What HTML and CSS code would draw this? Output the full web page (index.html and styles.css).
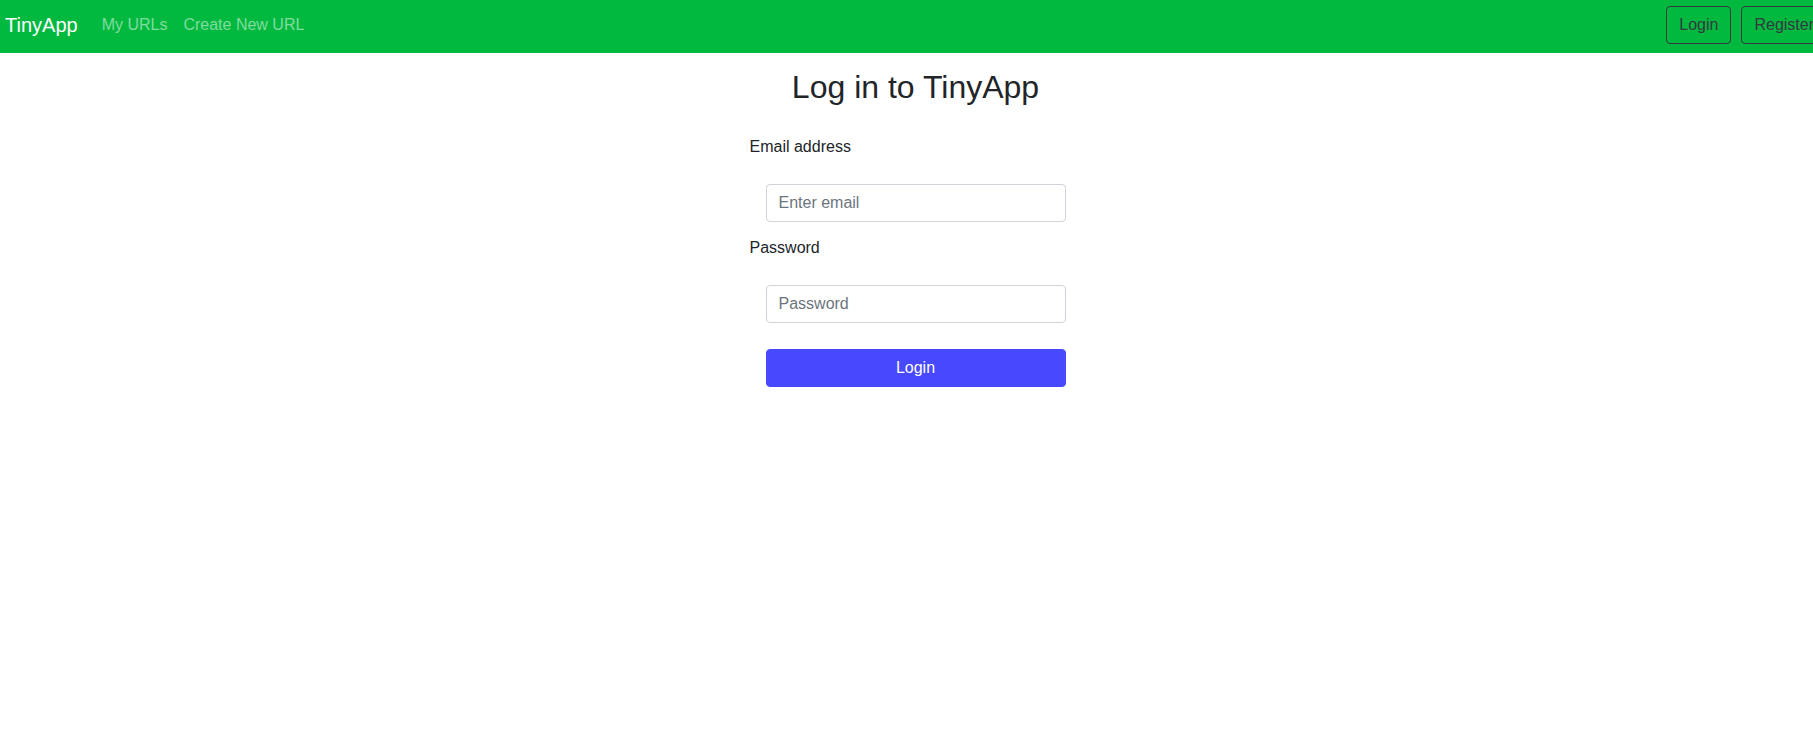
FILE: index.html
```html
<!DOCTYPE html>
<html lang="en">
<head>
<meta charset="utf-8">
<title>TinyApp - Login</title>
<link rel="stylesheet" href="styles.css">
</head>
<body>
<nav class="navbar">
  <div class="nav-left">
    <a class="brand" href="#">TinyApp</a>
    <a class="nav-link" href="#">My URLs</a>
    <a class="nav-link" href="#">Create New URL</a>
  </div>
  <div class="nav-right">
    <a class="btn-outline" href="#">Login</a>
    <a class="btn-outline" href="#">Register</a>
  </div>
</nav>
<main class="main">
  <h1 class="title">Log in to TinyApp</h1>
  <form class="login-form">
    <label class="field-label" for="email">Email address</label>
    <input class="field-input field-input-first" type="email" id="email" placeholder="Enter email">
    <label class="field-label" for="password">Password</label>
    <input class="field-input" type="password" id="password" placeholder="Password">
    <button class="submit-btn" type="submit">Login</button>
  </form>
</main>
</body>
</html>
```

FILE: styles.css
```css
* { box-sizing: border-box; }

html, body {
  margin: 0;
  padding: 0;
  overflow-x: hidden;
}

body {
  font-family: "Liberation Sans", Arial, sans-serif;
  font-size: 16px;
  line-height: 1.5;
  color: #212529;
  background: #fff;
}

.navbar {
  display: flex;
  align-items: center;
  justify-content: space-between;
  height: 53px;
  padding: 6px 0 9px 5px;
  background: #00b93e;
  overflow: hidden;
}

.nav-left {
  display: flex;
  align-items: center;
}

.brand {
  font-size: 20px;
  line-height: 30px;
  color: #fff;
  text-decoration: none;
  margin-right: 16px;
}

.nav-link {
  padding: 0 8px;
  line-height: 24px;
  color: rgba(255, 255, 255, 0.5);
  text-decoration: none;
}

.nav-right {
  display: flex;
  align-items: center;
  gap: 10px;
  margin-right: -14px;
  flex-shrink: 0;
}

.btn-outline {
  display: inline-block;
  height: 38px;
  padding: 6px 12px;
  line-height: 24px;
  border: 1px solid #343a40;
  border-radius: 4px;
  color: #343a40;
  text-decoration: none;
  white-space: nowrap;
}

.main {
  padding-left: 18px;
}

.title {
  margin: 15px 0 0;
  font-size: 32px;
  font-weight: 400;
  line-height: 1.2;
  text-align: center;
}

.login-form {
  display: flex;
  flex-direction: column;
  width: 332px;
  margin: 29px auto 0;
}

.field-label {
  display: block;
  line-height: 24px;
  margin-bottom: 25px;
}

.field-input {
  display: block;
  height: 38px;
  margin: 0 16px;
  padding: 6px 12px;
  font-family: inherit;
  font-size: 16px;
  line-height: 24px;
  color: #495057;
  border: 1px solid #ced4da;
  border-radius: 4px;
  background: #fff;
}

.field-input::placeholder {
  color: #6c757d;
}

.field-input-first {
  margin-bottom: 14px;
}

.submit-btn {
  display: block;
  height: 38px;
  margin: 26px 16px 0;
  padding: 6px 12px;
  font-family: inherit;
  font-size: 16px;
  line-height: 24px;
  color: #fff;
  background: #4848ff;
  border: 1px solid #4848ff;
  border-radius: 4px;
}
```
